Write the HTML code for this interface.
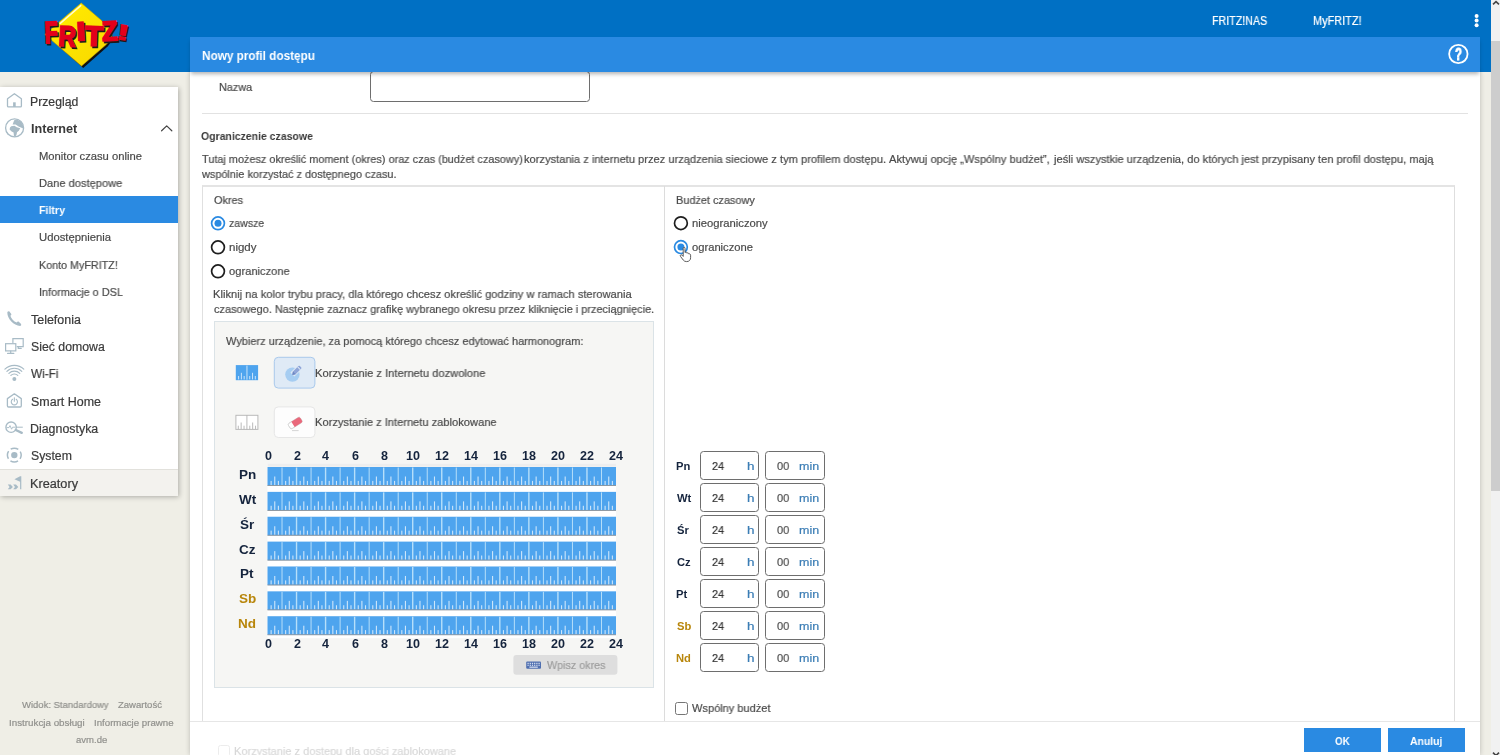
<!DOCTYPE html>
<html lang="pl">
<head>
<meta charset="utf-8">
<title>FRITZ!Box</title>
<style>
*{box-sizing:border-box;margin:0;padding:0}
html,body{width:1500px;height:755px;overflow:hidden}
body{background:#efeee6;font-family:"Liberation Sans",sans-serif;position:relative}
.abs{position:absolute}
.t{position:absolute;white-space:nowrap;line-height:1;transform-origin:0 0;display:block;will-change:transform}
#hdr{left:0;top:0;width:1500px;height:72px;background:#0070c4}
#side{left:0;top:87px;width:178px;height:408.6px;background:#fff;box-shadow:1px 1px 5px rgba(0,0,0,.28)}
#side .act{left:0;top:109.3px;width:178px;height:26.6px;background:#2a8ae2}
#side .kre{left:0;top:382.3px;width:178px;height:26.3px;background:#f3f2ee;border-top:1px solid #e2e1dc}
#dlg{left:190px;top:72px;width:1290px;height:683px;background:#fff;box-shadow:0 0 5px rgba(0,0,0,.22)}
#dhd{left:190px;top:37px;width:1290px;height:35px;background:#2a8ae2;box-shadow:0 3px 4px -1px rgba(0,0,0,.3)}
.hr{height:1px;background:#e2e2e2}
.inp{border:1px solid #6e6e6e;border-radius:3.5px;background:#fff}
.radio{width:15px;height:15px;border-radius:50%;border:1.6px solid #222;background:#fff}
.radio.on{border-color:#2a8ae2}
.radio.on::after{content:"";position:absolute;left:2.6px;top:2.6px;width:6.6px;height:6.6px;border-radius:50%;background:#2a8ae2}
.btn{background:#2a8ae2;height:23.8px;top:728.3px}
</style>
</head>
<body>
<div id="hdr" class="abs"></div>
<svg class="abs" style="left:30px;top:0" width="120" height="72" viewBox="30 0 120 72" font-family="Liberation Sans, sans-serif" font-weight="700" font-size="100">
<defs><linearGradient id="yg" x1="0" y1="0" x2="1" y2="1"><stop offset="0" stop-color="#fff27a"/><stop offset="0.25" stop-color="#ffe800"/><stop offset="1" stop-color="#f8d800"/></linearGradient></defs>
<path d="M83 5.2 L106.8 25 Q117.4 35.8 107.6 46.4 L83.2 68 L47 36 Z" fill="#111"/>
<path d="M81.2 3 L105 23.4 Q118.6 34.2 106 44.7 L81.5 66 L44.8 34.4 Z" fill="url(#yg)" stroke="#c9a800" stroke-width="0.6"/>
<path d="M80.8 5.6 L60 23.6" stroke="#fffbd0" stroke-width="1.4" stroke-linecap="round" fill="none"/>
<text transform="translate(1.50 1.60) rotate(-2 51.25 32.40) translate(44.30 42.89) scale(0.2173 0.3086)" fill="#1a1a1a" stroke="#1a1a1a" stroke-width="1.40" stroke-linejoin="miter" vector-effect="non-scaling-stroke">F</text>
<text transform="translate(1.50 1.60) rotate(3 67.70 36.30) translate(58.46 46.30) scale(0.2400 0.2899)" fill="#1a1a1a" stroke="#1a1a1a" stroke-width="1.40" stroke-linejoin="miter" vector-effect="non-scaling-stroke">R</text>
<text transform="translate(1.50 1.60) rotate(-3 80.90 31.10) translate(76.00 40.50) scale(0.3500 0.2686)" fill="#1a1a1a" stroke="#1a1a1a" stroke-width="1.40" stroke-linejoin="miter" vector-effect="non-scaling-stroke">I</text>
<text transform="translate(1.50 1.60) rotate(2 94.00 36.00) translate(84.60 45.90) scale(0.3033 0.2829)" fill="#1a1a1a" stroke="#1a1a1a" stroke-width="1.40" stroke-linejoin="miter" vector-effect="non-scaling-stroke">T</text>
<text transform="translate(1.50 1.60) rotate(-3 109.70 31.10) translate(101.78 40.70) scale(0.2596 0.2783)" fill="#1a1a1a" stroke="#1a1a1a" stroke-width="1.40" stroke-linejoin="miter" vector-effect="non-scaling-stroke">Z</text>
<text transform="translate(1.50 1.60) rotate(9 123.10 32.30) translate(116.94 39.70) scale(0.3733 0.2145)" fill="#1a1a1a" stroke="#1a1a1a" stroke-width="1.40" stroke-linejoin="miter" vector-effect="non-scaling-stroke">!</text>
<text transform="translate(0.00 0.00) rotate(-2 51.25 32.40) translate(44.30 42.89) scale(0.2173 0.3086)" fill="#e3001b" stroke="#e3001b" stroke-width="1.40" stroke-linejoin="miter" vector-effect="non-scaling-stroke">F</text>
<text transform="translate(0.00 0.00) rotate(3 67.70 36.30) translate(58.46 46.30) scale(0.2400 0.2899)" fill="#e3001b" stroke="#e3001b" stroke-width="1.40" stroke-linejoin="miter" vector-effect="non-scaling-stroke">R</text>
<text transform="translate(0.00 0.00) rotate(-3 80.90 31.10) translate(76.00 40.50) scale(0.3500 0.2686)" fill="#e3001b" stroke="#e3001b" stroke-width="1.40" stroke-linejoin="miter" vector-effect="non-scaling-stroke">I</text>
<text transform="translate(0.00 0.00) rotate(2 94.00 36.00) translate(84.60 45.90) scale(0.3033 0.2829)" fill="#e3001b" stroke="#e3001b" stroke-width="1.40" stroke-linejoin="miter" vector-effect="non-scaling-stroke">T</text>
<text transform="translate(0.00 0.00) rotate(-3 109.70 31.10) translate(101.78 40.70) scale(0.2596 0.2783)" fill="#e3001b" stroke="#e3001b" stroke-width="1.40" stroke-linejoin="miter" vector-effect="non-scaling-stroke">Z</text>
<text transform="translate(0.00 0.00) rotate(9 123.10 32.30) translate(116.94 39.70) scale(0.3733 0.2145)" fill="#e3001b" stroke="#e3001b" stroke-width="1.40" stroke-linejoin="miter" vector-effect="non-scaling-stroke">!</text>
</svg>
<div id="side" class="abs">
  <div class="abs act"></div>
  <div class="abs kre"></div>
</div>
<svg class="abs" style="left:0;top:87px" width="30" height="410" viewBox="0 87 30 410" fill="none" stroke="#a8bbc6" stroke-width="1.3" stroke-linecap="round" stroke-linejoin="round">
<!-- home -->
<path d="M7.5 98.8 L14.4 93.7 L21.4 98.8 V105.9 Q21.4 106.9 20.4 106.9 H8.5 Q7.5 106.9 7.5 105.9 Z"/>
<rect x="13.1" y="102.3" width="2.6" height="4.6" fill="#a8bbc6" stroke="none"/>
<!-- globe -->
<circle cx="14.6" cy="127.9" r="9"/>
<path fill="#a8bbc6" stroke="none" d="M14.2 120.2 L16.8 119.4 L20.6 121.4 L23 125 L23.2 128.6 L18.6 126.4 L15.6 124.6 L12.6 124.6 Z"/>
<path fill="#a8bbc6" stroke="none" d="M11.2 126.2 L14.4 125.7 L16.8 127.2 L20.2 128.3 L18.8 130.8 L17 132.2 L16.6 134.6 L15.4 136.6 L14 136.4 L13.6 132.6 L11.6 131.6 L9.6 129.6 L10 127.6 Z"/>
<path fill="#a8bbc6" stroke="none" d="M6.4 132.2 L7.8 133 L8.6 134.6 L7.6 134.4 Z"/>
<!-- phone -->
<path fill="#a8bbc6" stroke="none" d="M7.3 312.6 Q7.5 311.2 9.2 311.3 L11.3 314.1 Q11.7 315 10.4 315.8 C11 318.6 13.8 321.5 16.7 322.5 Q17.5 321.2 18.5 321.6 L21.1 324 Q21.7 325.4 20.2 325.9 C13.6 325.7 7.4 319 7.3 312.6 Z"/>
<!-- network -->
<g stroke-width="1.2" stroke-linejoin="miter">
<path d="M12.9 342.6 V338.6 H23.2 V346.7 H17.2"/>
<path d="M18.3 346.9 V348.4 H21.2"/>
<rect x="5.6" y="343.7" width="10.2" height="7.2" fill="#fff"/>
<path d="M10.7 351 V353 M7.6 353.4 H13.8"/>
</g>
<!-- wifi -->
<g stroke-width="1.15">
<path d="M4.9 369.2 A13.6 13.6 0 0 1 23.8 369.2"/>
<path d="M6.9 371.3 A10.7 10.7 0 0 1 21.8 371.3"/>
<path d="M8.9 373.3 A7.8 7.8 0 0 1 19.8 373.3"/>
<path d="M10.9 375.4 A4.9 4.9 0 0 1 17.8 375.4"/>
</g>
<circle cx="14.35" cy="378.9" r="2" fill="#a8bbc6" stroke="none"/>
<!-- smart home -->
<path d="M7.4 398.6 L14.35 393.8 L21.3 398.6 V405.8 Q21.3 407 20.1 407 H8.6 Q7.4 407 7.4 405.8 Z"/>
<path stroke-width="1.1" d="M12.5 399.3 A3.1 3.1 0 1 0 16.2 399.3 M14.35 397.7 V401.2"/>
<!-- diagnostics -->
<circle cx="11.1" cy="427.2" r="5.2" stroke-width="1.35"/>
<path stroke-width="0.9" d="M7 427.6 H9 L10 425.6 L11.6 429.2 L12.6 427.2 H15"/>
<path stroke-width="1" d="M16.4 427.2 H22.4"/>
<path stroke-width="2.4" d="M15.8 430 L21.8 432.8"/>
<!-- system -->
<circle cx="14.3" cy="455.1" r="6.9" stroke-width="1.5" stroke-dasharray="8.0 2.84" stroke-dashoffset="4.0" stroke-linecap="butt"/>
<circle cx="14.3" cy="455.1" r="3.2" fill="#a8bbc6" stroke="none"/>
<!-- wizards -->
<path fill="#a8bbc6" stroke="none" d="M20.1 476.2 H21.3 V489.3 H20.1 V481.8 L14.4 479.2 Z"/>
<path fill="#a8bbc6" stroke="none" d="M7.8 484.5 H10.6 L12.9 486.9 L10.6 489.3 H7.8 L9.6 486.9 Z M13.2 484.5 H16 L18.3 486.9 L16 489.3 H13.2 L15 486.9 Z"/>
</svg>
<svg class="abs" style="left:159px;top:122px" width="16" height="12" viewBox="159 122 16 12" fill="none" stroke="#444" stroke-width="1.2" stroke-linecap="round" stroke-linejoin="round"><path d="M161.6 130.8 L166.7 125.9 L171.8 130.8"/></svg>

<div id="dlg" class="abs"></div>
<!-- dialog content -->
<div class="abs inp" style="left:370px;top:71px;width:220px;height:30.6px"></div>
<div class="abs hr" style="left:202px;top:113px;width:1266px"></div>
<!-- outer box -->
<div class="abs" style="left:202px;top:185px;width:1253px;height:537px;border:1px solid #dedede;border-left:1.5px solid #e0e0e0;border-top:2px solid #e4e4e4"></div>
<div class="abs" style="left:664px;top:186px;width:1px;height:536px;background:#dcdcdc"></div>
<!-- radios -->
<svg class="abs" style="left:205px;top:210px" width="500" height="70" viewBox="205 210 500 70" fill="none" stroke-width="1.7">
<circle cx="218" cy="223.3" r="6.4" stroke="#2a8ae2"/><circle cx="218" cy="223.3" r="3.5" fill="#2a8ae2"/>
<circle cx="218" cy="247.3" r="6.4" stroke="#1e1e1e"/>
<circle cx="218" cy="271.3" r="6.4" stroke="#1e1e1e"/>
<circle cx="680.9" cy="223.2" r="6.4" stroke="#1e1e1e"/>
<circle cx="680.9" cy="247.1" r="6.4" stroke="#2a8ae2"/><circle cx="680.9" cy="247.1" r="3.5" fill="#2a8ae2"/>
<path d="M683.2 248.4 Q683.2 247.3 684.1 247.3 Q685 247.3 685 248.4 V252.6 Q685.6 251.9 686.4 252.3 Q686.9 252.6 686.9 253.2 Q687.5 252.6 688.2 253 Q688.8 253.4 688.8 254 Q689.4 253.6 690 254 Q690.6 254.4 690.6 255.2 V257.6 Q690.6 259.6 689.6 260.4 Q688.6 261.6 686.6 261.6 Q684.4 261.6 683.2 260 L680.5 256.4 Q679.9 255.6 680.6 255 Q681.4 254.5 682.1 255.2 L683.2 256.4 Z" fill="#fff" stroke="#4a4a4a" stroke-width="0.9" stroke-linejoin="round"/>
</svg>
<!-- inner schedule box -->
<div class="abs" style="left:214px;top:321px;width:440px;height:367px;background:#f6f6f4;border:1px solid #dbe3e7"></div>
<svg class="abs" style="left:214px;top:321px" width="440" height="367" viewBox="214 321 440 367">
<defs><g id="srow">
<rect x="267.50" y="0" width="348.50" height="18.60" fill="#4ea4ee"/>
<rect x="270.58" y="13.90" width="1.1" height="4.2" fill="#fff" fill-opacity=".72"/>
<rect x="274.21" y="9.50" width="1.1" height="8.6" fill="#fff" fill-opacity=".72"/>
<rect x="277.84" y="13.90" width="1.1" height="4.2" fill="#fff" fill-opacity=".72"/>
<rect x="285.10" y="13.90" width="1.1" height="4.2" fill="#fff" fill-opacity=".72"/>
<rect x="288.73" y="9.50" width="1.1" height="8.6" fill="#fff" fill-opacity=".72"/>
<rect x="292.36" y="13.90" width="1.1" height="4.2" fill="#fff" fill-opacity=".72"/>
<rect x="281.52" y="0.5" width="1.0" height="17.60" fill="#e8fbff" fill-opacity=".68"/>
<rect x="299.62" y="13.90" width="1.1" height="4.2" fill="#fff" fill-opacity=".72"/>
<rect x="303.25" y="9.50" width="1.1" height="8.6" fill="#fff" fill-opacity=".72"/>
<rect x="306.88" y="13.90" width="1.1" height="4.2" fill="#fff" fill-opacity=".72"/>
<rect x="295.84" y="0.5" width="1.4" height="17.60" fill="#e8fbff" fill-opacity=".68"/>
<rect x="314.14" y="13.90" width="1.1" height="4.2" fill="#fff" fill-opacity=".72"/>
<rect x="317.77" y="9.50" width="1.1" height="8.6" fill="#fff" fill-opacity=".72"/>
<rect x="321.40" y="13.90" width="1.1" height="4.2" fill="#fff" fill-opacity=".72"/>
<rect x="310.56" y="0.5" width="1.0" height="17.60" fill="#e8fbff" fill-opacity=".68"/>
<rect x="328.66" y="13.90" width="1.1" height="4.2" fill="#fff" fill-opacity=".72"/>
<rect x="332.29" y="9.50" width="1.1" height="8.6" fill="#fff" fill-opacity=".72"/>
<rect x="335.92" y="13.90" width="1.1" height="4.2" fill="#fff" fill-opacity=".72"/>
<rect x="324.88" y="0.5" width="1.4" height="17.60" fill="#e8fbff" fill-opacity=".68"/>
<rect x="343.18" y="13.90" width="1.1" height="4.2" fill="#fff" fill-opacity=".72"/>
<rect x="346.81" y="9.50" width="1.1" height="8.6" fill="#fff" fill-opacity=".72"/>
<rect x="350.44" y="13.90" width="1.1" height="4.2" fill="#fff" fill-opacity=".72"/>
<rect x="339.60" y="0.5" width="1.0" height="17.60" fill="#e8fbff" fill-opacity=".68"/>
<rect x="357.71" y="13.90" width="1.1" height="4.2" fill="#fff" fill-opacity=".72"/>
<rect x="361.34" y="9.50" width="1.1" height="8.6" fill="#fff" fill-opacity=".72"/>
<rect x="364.97" y="13.90" width="1.1" height="4.2" fill="#fff" fill-opacity=".72"/>
<rect x="353.93" y="0.5" width="1.4" height="17.60" fill="#e8fbff" fill-opacity=".68"/>
<rect x="372.23" y="13.90" width="1.1" height="4.2" fill="#fff" fill-opacity=".72"/>
<rect x="375.86" y="9.50" width="1.1" height="8.6" fill="#fff" fill-opacity=".72"/>
<rect x="379.49" y="13.90" width="1.1" height="4.2" fill="#fff" fill-opacity=".72"/>
<rect x="368.65" y="0.5" width="1.0" height="17.60" fill="#e8fbff" fill-opacity=".68"/>
<rect x="386.75" y="13.90" width="1.1" height="4.2" fill="#fff" fill-opacity=".72"/>
<rect x="390.38" y="9.50" width="1.1" height="8.6" fill="#fff" fill-opacity=".72"/>
<rect x="394.01" y="13.90" width="1.1" height="4.2" fill="#fff" fill-opacity=".72"/>
<rect x="382.97" y="0.5" width="1.4" height="17.60" fill="#e8fbff" fill-opacity=".68"/>
<rect x="401.27" y="13.90" width="1.1" height="4.2" fill="#fff" fill-opacity=".72"/>
<rect x="404.90" y="9.50" width="1.1" height="8.6" fill="#fff" fill-opacity=".72"/>
<rect x="408.53" y="13.90" width="1.1" height="4.2" fill="#fff" fill-opacity=".72"/>
<rect x="397.69" y="0.5" width="1.0" height="17.60" fill="#e8fbff" fill-opacity=".68"/>
<rect x="415.79" y="13.90" width="1.1" height="4.2" fill="#fff" fill-opacity=".72"/>
<rect x="419.42" y="9.50" width="1.1" height="8.6" fill="#fff" fill-opacity=".72"/>
<rect x="423.05" y="13.90" width="1.1" height="4.2" fill="#fff" fill-opacity=".72"/>
<rect x="412.01" y="0.5" width="1.4" height="17.60" fill="#e8fbff" fill-opacity=".68"/>
<rect x="430.31" y="13.90" width="1.1" height="4.2" fill="#fff" fill-opacity=".72"/>
<rect x="433.94" y="9.50" width="1.1" height="8.6" fill="#fff" fill-opacity=".72"/>
<rect x="437.57" y="13.90" width="1.1" height="4.2" fill="#fff" fill-opacity=".72"/>
<rect x="426.73" y="0.5" width="1.0" height="17.60" fill="#e8fbff" fill-opacity=".68"/>
<rect x="444.83" y="13.90" width="1.1" height="4.2" fill="#fff" fill-opacity=".72"/>
<rect x="448.46" y="9.50" width="1.1" height="8.6" fill="#fff" fill-opacity=".72"/>
<rect x="452.09" y="13.90" width="1.1" height="4.2" fill="#fff" fill-opacity=".72"/>
<rect x="441.05" y="0.5" width="1.4" height="17.60" fill="#e8fbff" fill-opacity=".68"/>
<rect x="459.35" y="13.90" width="1.1" height="4.2" fill="#fff" fill-opacity=".72"/>
<rect x="462.98" y="9.50" width="1.1" height="8.6" fill="#fff" fill-opacity=".72"/>
<rect x="466.61" y="13.90" width="1.1" height="4.2" fill="#fff" fill-opacity=".72"/>
<rect x="455.77" y="0.5" width="1.0" height="17.60" fill="#e8fbff" fill-opacity=".68"/>
<rect x="473.87" y="13.90" width="1.1" height="4.2" fill="#fff" fill-opacity=".72"/>
<rect x="477.50" y="9.50" width="1.1" height="8.6" fill="#fff" fill-opacity=".72"/>
<rect x="481.13" y="13.90" width="1.1" height="4.2" fill="#fff" fill-opacity=".72"/>
<rect x="470.09" y="0.5" width="1.4" height="17.60" fill="#e8fbff" fill-opacity=".68"/>
<rect x="488.39" y="13.90" width="1.1" height="4.2" fill="#fff" fill-opacity=".72"/>
<rect x="492.02" y="9.50" width="1.1" height="8.6" fill="#fff" fill-opacity=".72"/>
<rect x="495.65" y="13.90" width="1.1" height="4.2" fill="#fff" fill-opacity=".72"/>
<rect x="484.81" y="0.5" width="1.0" height="17.60" fill="#e8fbff" fill-opacity=".68"/>
<rect x="502.91" y="13.90" width="1.1" height="4.2" fill="#fff" fill-opacity=".72"/>
<rect x="506.54" y="9.50" width="1.1" height="8.6" fill="#fff" fill-opacity=".72"/>
<rect x="510.17" y="13.90" width="1.1" height="4.2" fill="#fff" fill-opacity=".72"/>
<rect x="499.13" y="0.5" width="1.4" height="17.60" fill="#e8fbff" fill-opacity=".68"/>
<rect x="517.43" y="13.90" width="1.1" height="4.2" fill="#fff" fill-opacity=".72"/>
<rect x="521.06" y="9.50" width="1.1" height="8.6" fill="#fff" fill-opacity=".72"/>
<rect x="524.69" y="13.90" width="1.1" height="4.2" fill="#fff" fill-opacity=".72"/>
<rect x="513.85" y="0.5" width="1.0" height="17.60" fill="#e8fbff" fill-opacity=".68"/>
<rect x="531.96" y="13.90" width="1.1" height="4.2" fill="#fff" fill-opacity=".72"/>
<rect x="535.59" y="9.50" width="1.1" height="8.6" fill="#fff" fill-opacity=".72"/>
<rect x="539.22" y="13.90" width="1.1" height="4.2" fill="#fff" fill-opacity=".72"/>
<rect x="528.17" y="0.5" width="1.4" height="17.60" fill="#e8fbff" fill-opacity=".68"/>
<rect x="546.48" y="13.90" width="1.1" height="4.2" fill="#fff" fill-opacity=".72"/>
<rect x="550.11" y="9.50" width="1.1" height="8.6" fill="#fff" fill-opacity=".72"/>
<rect x="553.74" y="13.90" width="1.1" height="4.2" fill="#fff" fill-opacity=".72"/>
<rect x="542.90" y="0.5" width="1.0" height="17.60" fill="#e8fbff" fill-opacity=".68"/>
<rect x="561.00" y="13.90" width="1.1" height="4.2" fill="#fff" fill-opacity=".72"/>
<rect x="564.63" y="9.50" width="1.1" height="8.6" fill="#fff" fill-opacity=".72"/>
<rect x="568.26" y="13.90" width="1.1" height="4.2" fill="#fff" fill-opacity=".72"/>
<rect x="557.22" y="0.5" width="1.4" height="17.60" fill="#e8fbff" fill-opacity=".68"/>
<rect x="575.52" y="13.90" width="1.1" height="4.2" fill="#fff" fill-opacity=".72"/>
<rect x="579.15" y="9.50" width="1.1" height="8.6" fill="#fff" fill-opacity=".72"/>
<rect x="582.78" y="13.90" width="1.1" height="4.2" fill="#fff" fill-opacity=".72"/>
<rect x="571.94" y="0.5" width="1.0" height="17.60" fill="#e8fbff" fill-opacity=".68"/>
<rect x="590.04" y="13.90" width="1.1" height="4.2" fill="#fff" fill-opacity=".72"/>
<rect x="593.67" y="9.50" width="1.1" height="8.6" fill="#fff" fill-opacity=".72"/>
<rect x="597.30" y="13.90" width="1.1" height="4.2" fill="#fff" fill-opacity=".72"/>
<rect x="586.26" y="0.5" width="1.4" height="17.60" fill="#e8fbff" fill-opacity=".68"/>
<rect x="604.56" y="13.90" width="1.1" height="4.2" fill="#fff" fill-opacity=".72"/>
<rect x="608.19" y="9.50" width="1.1" height="8.6" fill="#fff" fill-opacity=".72"/>
<rect x="611.82" y="13.90" width="1.1" height="4.2" fill="#fff" fill-opacity=".72"/>
<rect x="600.98" y="0.5" width="1.0" height="17.60" fill="#e8fbff" fill-opacity=".68"/>
<rect x="267.50" y="18.10" width="348.50" height="0.9" fill="#8b9299"/>
</g></defs>
<rect x="267.50" y="463.6" width="348.50" height="174.6" fill="#fff"/>
<rect x="267.50" y="463.6" width="348.50" height="3.2" fill="#eeeeee"/>
<use href="#srow" y="467.00"/>
<use href="#srow" y="491.87"/>
<use href="#srow" y="516.74"/>
<use href="#srow" y="541.61"/>
<use href="#srow" y="566.48"/>
<use href="#srow" y="591.35"/>
<use href="#srow" y="616.22"/>
<rect x="235.80" y="365.10" width="22.30" height="15.10" fill="#4ea4ee"/><rect x="246.45" y="365.60" width="1" height="14.10" fill="#fff" fill-opacity=".7"/><rect x="238.09" y="376.00" width="1" height="3.40" fill="#fff" fill-opacity=".7"/><rect x="240.88" y="372.80" width="1" height="6.60" fill="#fff" fill-opacity=".7"/><rect x="243.66" y="376.00" width="1" height="3.40" fill="#fff" fill-opacity=".7"/><rect x="249.24" y="376.00" width="1" height="3.40" fill="#fff" fill-opacity=".7"/><rect x="252.03" y="372.80" width="1" height="6.60" fill="#fff" fill-opacity=".7"/><rect x="254.81" y="376.00" width="1" height="3.40" fill="#fff" fill-opacity=".7"/>
<rect x="235.90" y="415.30" width="22.00" height="14.10" fill="#fff" stroke="#b9b9b9" stroke-width="1"/><rect x="246.40" y="415.30" width="1" height="14.10" fill="#aaa" fill-opacity=".8"/><rect x="237.78" y="425.70" width="1" height="3.40" fill="#aaa" fill-opacity=".8"/><rect x="240.65" y="422.50" width="1" height="6.60" fill="#aaa" fill-opacity=".8"/><rect x="243.53" y="425.70" width="1" height="3.40" fill="#aaa" fill-opacity=".8"/><rect x="249.28" y="425.70" width="1" height="3.40" fill="#aaa" fill-opacity=".8"/><rect x="252.15" y="422.50" width="1" height="6.60" fill="#aaa" fill-opacity=".8"/><rect x="255.03" y="425.70" width="1" height="3.40" fill="#aaa" fill-opacity=".8"/>
<rect x="274.3" y="357.3" width="40.6" height="30.8" rx="4" fill="#dfeaf6" stroke="#a9c9ec" stroke-width="1"/>
<circle cx="292.4" cy="374.6" r="7.2" fill="#a6cdf2"/>
<path d="M292.4 374.6 L299.6 367.4" stroke="#dfeaf6" stroke-width="5.6"/>
<g transform="translate(292.0 375.2) rotate(-45)"><path d="M0.4 0 L3.2 -1.9 H11 Q12 -1.9 12 -0.9 V0.9 Q12 1.9 11 1.9 H3.2 Z" fill="#8fa5d8"/><path d="M0.4 0 L3.2 -1.9 V1.9 Z" fill="#6c86c2"/><rect x="9.4" y="-1.9" width="0.9" height="3.8" fill="#dfeaf6"/></g>
<rect x="274.3" y="406.9" width="40.6" height="30.6" rx="4" fill="#fdfdfd" stroke="#e6e6e6" stroke-width="1"/>
<g transform="translate(295.2 423.0) rotate(-32)"><rect x="-7" y="-3.1" width="14" height="6.2" rx="1.6" fill="#fff" stroke="#c9c9c9" stroke-width=".8"/><path d="M-2.6 -3.1 H5.4 Q7 -3.1 7 -1.5 V1.5 Q7 3.1 5.4 3.1 H-2.6 Z" fill="#e9697b"/></g>
<path d="M292 430.6 H298.6" stroke="#c9c9c9" stroke-width=".8"/>
<rect x="513.4" y="655" width="104" height="19.8" rx="3" fill="#dedede"/>
<rect x="526.2" y="661.6" width="14.8" height="7.2" rx="1" fill="#4f6fb0"/>
<rect x="527.50" y="662.80" width="1.2" height="1.1" fill="#e6ecf8"/>
<rect x="529.70" y="662.80" width="1.2" height="1.1" fill="#e6ecf8"/>
<rect x="531.90" y="662.80" width="1.2" height="1.1" fill="#e6ecf8"/>
<rect x="534.10" y="662.80" width="1.2" height="1.1" fill="#e6ecf8"/>
<rect x="536.30" y="662.80" width="1.2" height="1.1" fill="#e6ecf8"/>
<rect x="538.50" y="662.80" width="1.2" height="1.1" fill="#e6ecf8"/>
<rect x="527.50" y="664.70" width="1.2" height="1.1" fill="#e6ecf8"/>
<rect x="529.70" y="664.70" width="1.2" height="1.1" fill="#e6ecf8"/>
<rect x="531.90" y="664.70" width="1.2" height="1.1" fill="#e6ecf8"/>
<rect x="534.10" y="664.70" width="1.2" height="1.1" fill="#e6ecf8"/>
<rect x="536.30" y="664.70" width="1.2" height="1.1" fill="#e6ecf8"/>
<rect x="538.50" y="664.70" width="1.2" height="1.1" fill="#e6ecf8"/>
<rect x="529.4" y="666.6" width="8.4" height="1.1" fill="#e6ecf8"/>
</svg>
<div class="abs inp" style="left:700.2px;top:451.2px;width:59.2px;height:29px"></div><div class="abs inp" style="left:765.3px;top:451.2px;width:59.7px;height:29px"></div>
<div class="abs inp" style="left:700.2px;top:483.2px;width:59.2px;height:29px"></div><div class="abs inp" style="left:765.3px;top:483.2px;width:59.7px;height:29px"></div>
<div class="abs inp" style="left:700.2px;top:515.2px;width:59.2px;height:29px"></div><div class="abs inp" style="left:765.3px;top:515.2px;width:59.7px;height:29px"></div>
<div class="abs inp" style="left:700.2px;top:547.2px;width:59.2px;height:29px"></div><div class="abs inp" style="left:765.3px;top:547.2px;width:59.7px;height:29px"></div>
<div class="abs inp" style="left:700.2px;top:579.2px;width:59.2px;height:29px"></div><div class="abs inp" style="left:765.3px;top:579.2px;width:59.7px;height:29px"></div>
<div class="abs inp" style="left:700.2px;top:611.2px;width:59.2px;height:29px"></div><div class="abs inp" style="left:765.3px;top:611.2px;width:59.7px;height:29px"></div>
<div class="abs inp" style="left:700.2px;top:643.2px;width:59.2px;height:29px"></div><div class="abs inp" style="left:765.3px;top:643.2px;width:59.7px;height:29px"></div>
<div class="abs" style="left:675.4px;top:702.4px;width:12.2px;height:12.2px;border:1.5px solid #767676;border-radius:2.5px;background:#fff"></div>
<div class="abs" style="left:218px;top:745px;width:12px;height:12px;border:1.5px solid #767676;border-radius:2.5px;background:#fff"></div>
<!--TEXTS_BEHIND-->
<!-- button bar -->
<div class="abs" style="left:190px;top:721px;width:1290px;height:34px;background:rgba(255,255,255,.86);border-top:1.5px solid #e6e6e6"></div>
<div class="abs btn" style="left:1304px;width:77px"></div>
<div class="abs btn" style="left:1388.2px;width:77.2px"></div>
<div id="dhd" class="abs"></div>
<svg class="abs" style="left:1440px;top:0" width="50" height="75" viewBox="1440 0 50 75">
<circle cx="1476.6" cy="15.9" r="2" fill="#fff"/><circle cx="1476.6" cy="20.6" r="2" fill="#fff"/><circle cx="1476.6" cy="25.3" r="2" fill="#fff"/>
<circle cx="1458.35" cy="54" r="9.2" fill="none" stroke="#fff" stroke-width="1.8"/>
</svg>

<span class="t" style="left:1211.55px;top:15.14px;font-size:12px;-webkit-text-stroke:0.2px #ffffff;color:#ffffff;transform:scaleX(0.8903);">FRITZ!NAS</span>
<span class="t" style="left:1312.83px;top:15.14px;font-size:12px;-webkit-text-stroke:0.2px #ffffff;color:#ffffff;transform:scaleX(0.9106);">MyFRITZ!</span>
<span class="t" style="left:202.04px;top:49.99px;font-size:12.3px;font-weight:700;color:#ffffff;transform:scaleX(0.9550);">Nowy profil dostępu</span>
<span class="t" style="left:1455.14px;top:45.89px;font-size:16.2px;font-weight:700;color:#ffffff;transform:scaleX(0.7088);-webkit-text-stroke:0.9px #fff;">?</span>
<span class="t" style="left:30.43px;top:96.14px;font-size:12px;-webkit-text-stroke:0.2px #3a3a3a;color:#3a3a3a;transform:scaleX(1.0200);">Przegląd</span>
<span class="t" style="left:30.56px;top:122.94px;font-size:12px;font-weight:700;color:#3a3a3a;transform:scaleX(1.0521);">Internet</span>
<span class="t" style="left:31.14px;top:313.74px;font-size:12px;-webkit-text-stroke:0.2px #3a3a3a;color:#3a3a3a;transform:scaleX(1.0374);">Telefonia</span>
<span class="t" style="left:30.89px;top:340.84px;font-size:12px;-webkit-text-stroke:0.2px #3a3a3a;color:#3a3a3a;transform:scaleX(1.0243);">Sieć domowa</span>
<span class="t" style="left:31.35px;top:368.24px;font-size:12px;-webkit-text-stroke:0.2px #3a3a3a;color:#3a3a3a;transform:scaleX(0.9791);">Wi-Fi</span>
<span class="t" style="left:30.88px;top:395.74px;font-size:12px;-webkit-text-stroke:0.2px #3a3a3a;color:#3a3a3a;transform:scaleX(1.0388);">Smart Home</span>
<span class="t" style="left:30.42px;top:423.14px;font-size:12px;-webkit-text-stroke:0.2px #3a3a3a;color:#3a3a3a;transform:scaleX(1.0336);">Diagnostyka</span>
<span class="t" style="left:30.89px;top:450.24px;font-size:12px;-webkit-text-stroke:0.2px #3a3a3a;color:#3a3a3a;transform:scaleX(1.0216);">System</span>
<span class="t" style="left:30.39px;top:478.44px;font-size:12px;-webkit-text-stroke:0.2px #3a3a3a;color:#3a3a3a;transform:scaleX(1.0585);">Kreatory</span>
<span class="t" style="left:39.10px;top:150.72px;font-size:11.2px;-webkit-text-stroke:0.2px #4a4a4a;color:#4a4a4a;transform:scaleX(1.0026);">Monitor czasu online</span>
<span class="t" style="left:39.11px;top:177.92px;font-size:11.2px;-webkit-text-stroke:0.2px #4a4a4a;color:#4a4a4a;transform:scaleX(0.9918);">Dane dostępowe</span>
<span class="t" style="left:39.34px;top:205.12px;font-size:11.2px;font-weight:700;color:#ffffff;transform:scaleX(0.9492);">Filtry</span>
<span class="t" style="left:39.14px;top:232.42px;font-size:11.2px;-webkit-text-stroke:0.2px #4a4a4a;color:#4a4a4a;transform:scaleX(1.0074);">Udostępnienia</span>
<span class="t" style="left:39.14px;top:259.82px;font-size:11.2px;-webkit-text-stroke:0.2px #4a4a4a;color:#4a4a4a;transform:scaleX(0.9597);">Konto MyFRITZ!</span>
<span class="t" style="left:39.03px;top:287.12px;font-size:11.2px;-webkit-text-stroke:0.2px #4a4a4a;color:#4a4a4a;transform:scaleX(0.9707);">Informacje o DSL</span>
<span class="t" style="left:21.70px;top:700.06px;font-size:9.5px;-webkit-text-stroke:0.2px #91918d;color:#91918d;transform:scaleX(0.9940);">Widok: Standardowy</span>
<span class="t" style="left:118.00px;top:700.06px;font-size:9.5px;-webkit-text-stroke:0.2px #91918d;color:#91918d;transform:scaleX(1.0031);">Zawartość</span>
<span class="t" style="left:9.42px;top:717.86px;font-size:9.5px;-webkit-text-stroke:0.2px #91918d;color:#91918d;transform:scaleX(1.0315);">Instrukcja obsługi</span>
<span class="t" style="left:93.63px;top:717.86px;font-size:9.5px;-webkit-text-stroke:0.2px #91918d;color:#91918d;transform:scaleX(1.0180);">Informacje prawne</span>
<span class="t" style="left:75.80px;top:735.06px;font-size:9.5px;-webkit-text-stroke:0.2px #91918d;color:#91918d;transform:scaleX(1.0043);">avm.de</span>
<span class="t" style="left:218.83px;top:81.92px;font-size:11.2px;-webkit-text-stroke:0.2px #4a4a4a;color:#4a4a4a;transform:scaleX(0.9684);">Nazwa</span>
<span class="t" style="left:201.38px;top:131.42px;font-size:11.2px;font-weight:700;color:#3a3a3a;transform:scaleX(0.9369);">Ograniczenie czasowe</span>
<span class="t" style="left:201.76px;top:154.42px;font-size:11.2px;-webkit-text-stroke:0.2px #4a4a4a;color:#4a4a4a;transform:scaleX(0.9731);">Tutaj możesz określić moment (okres) oraz czas (budżet czasowy)</span>
<span class="t" style="left:524.26px;top:154.42px;font-size:11.2px;-webkit-text-stroke:0.2px #4a4a4a;color:#4a4a4a;transform:scaleX(0.9919);">korzystania z internetu przez urządzenia sieciowe z tym profilem dostępu.</span>
<span class="t" style="left:889.30px;top:154.42px;font-size:11.2px;-webkit-text-stroke:0.2px #4a4a4a;color:#4a4a4a;transform:scaleX(0.9945);">Aktywuj opcję „Wspólny budżet”,</span>
<span class="t" style="left:1053.60px;top:154.42px;font-size:11.2px;-webkit-text-stroke:0.2px #4a4a4a;color:#4a4a4a;transform:scaleX(0.9920);">jeśli wszystkie urządzenia, do których jest przypisany ten profil dostępu, mają</span>
<span class="t" style="left:202.05px;top:168.92px;font-size:11.2px;-webkit-text-stroke:0.2px #4a4a4a;color:#4a4a4a;transform:scaleX(0.9745);">wspólnie korzystać z dostępnego czasu.</span>
<span class="t" style="left:213.51px;top:195.02px;font-size:11.2px;-webkit-text-stroke:0.2px #4a4a4a;color:#4a4a4a;transform:scaleX(0.9734);">Okres</span>
<span class="t" style="left:229.17px;top:218.32px;font-size:11.2px;-webkit-text-stroke:0.2px #4a4a4a;color:#4a4a4a;transform:scaleX(0.9446);">zawsze</span>
<span class="t" style="left:228.88px;top:242.32px;font-size:11.2px;-webkit-text-stroke:0.2px #4a4a4a;color:#4a4a4a;transform:scaleX(1.0278);">nigdy</span>
<span class="t" style="left:229.15px;top:266.32px;font-size:11.2px;-webkit-text-stroke:0.2px #4a4a4a;color:#4a4a4a;transform:scaleX(0.9952);">ograniczone</span>
<span class="t" style="left:213.10px;top:289.12px;font-size:11.2px;-webkit-text-stroke:0.2px #4a4a4a;color:#4a4a4a;transform:scaleX(0.9951);">Kliknij na kolor trybu pracy, dla którego chcesz określić godziny w ramach sterowania</span>
<span class="t" style="left:213.56px;top:303.92px;font-size:11.2px;-webkit-text-stroke:0.2px #4a4a4a;color:#4a4a4a;transform:scaleX(0.9778);">czasowego. Następnie zaznacz grafikę wybranego okresu przez kliknięcie i przeciągnięcie.</span>
<span class="t" style="left:226.20px;top:335.52px;font-size:11.2px;-webkit-text-stroke:0.2px #4a4a4a;color:#4a4a4a;transform:scaleX(0.9828);">Wybierz urządzenie, za pomocą którego chcesz edytować harmonogram:</span>
<span class="t" style="left:314.70px;top:367.72px;font-size:11.2px;-webkit-text-stroke:0.2px #4a4a4a;color:#4a4a4a;transform:scaleX(0.9969);">Korzystanie z Internetu dozwolone</span>
<span class="t" style="left:314.71px;top:417.22px;font-size:11.2px;-webkit-text-stroke:0.2px #4a4a4a;color:#4a4a4a;transform:scaleX(0.9931);">Korzystanie z Internetu zablokowane</span>
<span class="t" style="left:546.80px;top:659.72px;font-size:11.2px;-webkit-text-stroke:0.2px #9d9d9d;color:#9d9d9d;transform:scaleX(0.9606);">Wpisz okres</span>
<span class="t" style="left:676.12px;top:195.02px;font-size:11.2px;-webkit-text-stroke:0.2px #4a4a4a;color:#4a4a4a;transform:scaleX(0.9747);">Budżet czasowy</span>
<span class="t" style="left:691.90px;top:218.32px;font-size:11.2px;-webkit-text-stroke:0.2px #4a4a4a;color:#4a4a4a;transform:scaleX(1.0062);">nieograniczony</span>
<span class="t" style="left:692.15px;top:242.12px;font-size:11.2px;-webkit-text-stroke:0.2px #4a4a4a;color:#4a4a4a;transform:scaleX(1.0001);">ograniczone</span>
<span class="t" style="left:692.20px;top:703.32px;font-size:11.2px;-webkit-text-stroke:0.2px #4a4a4a;color:#4a4a4a;transform:scaleX(0.9859);">Wspólny budżet</span>
<span class="t" style="left:234.11px;top:745.72px;font-size:11.2px;-webkit-text-stroke:0.2px #d8d8d8;color:#d8d8d8;transform:scaleX(0.9839);">Korzystanie z dostępu dla gości zablokowane</span>
<span class="t" style="left:1334.94px;top:736.26px;font-size:10.8px;font-weight:700;color:#ffffff;transform:scaleX(0.9044);">OK</span>
<span class="t" style="left:1410.36px;top:736.26px;font-size:10.8px;font-weight:700;color:#ffffff;transform:scaleX(0.9634);">Anuluj</span>
<span class="t" style="left:238.50px;top:468.07px;font-size:13.5px;font-weight:700;color:#15243d;transform:scaleX(0.9750);">Pn</span>
<span class="t" style="left:238.63px;top:492.92px;font-size:13.5px;font-weight:700;color:#15243d;transform:scaleX(0.9750);">Wt</span>
<span class="t" style="left:240.04px;top:517.77px;font-size:13.5px;font-weight:700;color:#15243d;transform:scaleX(0.9750);">Śr</span>
<span class="t" style="left:238.96px;top:542.62px;font-size:13.5px;font-weight:700;color:#15243d;transform:scaleX(0.9750);">Cz</span>
<span class="t" style="left:240.04px;top:567.47px;font-size:13.5px;font-weight:700;color:#15243d;transform:scaleX(0.9750);">Pt</span>
<span class="t" style="left:238.70px;top:592.32px;font-size:13.5px;font-weight:700;color:#b8860b;transform:scaleX(0.9750);">Sb</span>
<span class="t" style="left:238.24px;top:617.17px;font-size:13.5px;font-weight:700;color:#b8860b;transform:scaleX(0.9750);">Nd</span>
<span class="t" style="left:264.52px;top:449.87px;font-size:12.2px;font-weight:700;color:#15243d;transform:scaleX(1.0300);">0</span>
<span class="t" style="left:264.52px;top:638.17px;font-size:12.2px;font-weight:700;color:#15243d;transform:scaleX(1.0300);">0</span>
<span class="t" style="left:293.57px;top:449.87px;font-size:12.2px;font-weight:700;color:#15243d;transform:scaleX(1.0300);">2</span>
<span class="t" style="left:293.57px;top:638.17px;font-size:12.2px;font-weight:700;color:#15243d;transform:scaleX(1.0300);">2</span>
<span class="t" style="left:322.49px;top:449.87px;font-size:12.2px;font-weight:700;color:#15243d;transform:scaleX(1.0300);">4</span>
<span class="t" style="left:322.49px;top:638.17px;font-size:12.2px;font-weight:700;color:#15243d;transform:scaleX(1.0300);">4</span>
<span class="t" style="left:351.58px;top:449.87px;font-size:12.2px;font-weight:700;color:#15243d;transform:scaleX(1.0300);">6</span>
<span class="t" style="left:351.58px;top:638.17px;font-size:12.2px;font-weight:700;color:#15243d;transform:scaleX(1.0300);">6</span>
<span class="t" style="left:380.58px;top:449.87px;font-size:12.2px;font-weight:700;color:#15243d;transform:scaleX(1.0300);">8</span>
<span class="t" style="left:380.58px;top:638.17px;font-size:12.2px;font-weight:700;color:#15243d;transform:scaleX(1.0300);">8</span>
<span class="t" style="left:405.97px;top:449.87px;font-size:12.2px;font-weight:700;color:#15243d;transform:scaleX(1.0300);">10</span>
<span class="t" style="left:405.97px;top:638.17px;font-size:12.2px;font-weight:700;color:#15243d;transform:scaleX(1.0300);">10</span>
<span class="t" style="left:434.99px;top:449.87px;font-size:12.2px;font-weight:700;color:#15243d;transform:scaleX(1.0300);">12</span>
<span class="t" style="left:434.99px;top:638.17px;font-size:12.2px;font-weight:700;color:#15243d;transform:scaleX(1.0300);">12</span>
<span class="t" style="left:463.78px;top:449.87px;font-size:12.2px;font-weight:700;color:#15243d;transform:scaleX(1.0300);">14</span>
<span class="t" style="left:463.78px;top:638.17px;font-size:12.2px;font-weight:700;color:#15243d;transform:scaleX(1.0300);">14</span>
<span class="t" style="left:493.01px;top:449.87px;font-size:12.2px;font-weight:700;color:#15243d;transform:scaleX(1.0300);">16</span>
<span class="t" style="left:493.01px;top:638.17px;font-size:12.2px;font-weight:700;color:#15243d;transform:scaleX(1.0300);">16</span>
<span class="t" style="left:521.98px;top:449.87px;font-size:12.2px;font-weight:700;color:#15243d;transform:scaleX(1.0300);">18</span>
<span class="t" style="left:521.98px;top:638.17px;font-size:12.2px;font-weight:700;color:#15243d;transform:scaleX(1.0300);">18</span>
<span class="t" style="left:551.26px;top:449.87px;font-size:12.2px;font-weight:700;color:#15243d;transform:scaleX(1.0300);">20</span>
<span class="t" style="left:551.26px;top:638.17px;font-size:12.2px;font-weight:700;color:#15243d;transform:scaleX(1.0300);">20</span>
<span class="t" style="left:580.28px;top:449.87px;font-size:12.2px;font-weight:700;color:#15243d;transform:scaleX(1.0300);">22</span>
<span class="t" style="left:580.28px;top:638.17px;font-size:12.2px;font-weight:700;color:#15243d;transform:scaleX(1.0300);">22</span>
<span class="t" style="left:609.06px;top:449.87px;font-size:12.2px;font-weight:700;color:#15243d;transform:scaleX(1.0300);">24</span>
<span class="t" style="left:609.06px;top:638.17px;font-size:12.2px;font-weight:700;color:#15243d;transform:scaleX(1.0300);">24</span>
<span class="t" style="left:676.31px;top:460.52px;font-size:11.2px;font-weight:700;color:#15243d;transform:scaleX(0.9900);">Pn</span>
<span class="t" style="left:711.67px;top:460.52px;font-size:11.2px;-webkit-text-stroke:0.2px #333333;color:#333333;transform:scaleX(0.9631);">24</span>
<span class="t" style="left:746.69px;top:460.52px;font-size:11.2px;-webkit-text-stroke:0.2px #3b7db5;color:#3b7db5;transform:scaleX(1.2083);">h</span>
<span class="t" style="left:777.21px;top:460.52px;font-size:11.2px;-webkit-text-stroke:0.2px #505050;color:#505050;transform:scaleX(0.9803);">00</span>
<span class="t" style="left:799.12px;top:460.52px;font-size:11.2px;-webkit-text-stroke:0.2px #3b7db5;color:#3b7db5;transform:scaleX(1.1159);">min</span>
<span class="t" style="left:677.00px;top:492.52px;font-size:11.2px;font-weight:700;color:#15243d;transform:scaleX(0.9900);">Wt</span>
<span class="t" style="left:711.67px;top:492.52px;font-size:11.2px;-webkit-text-stroke:0.2px #333333;color:#333333;transform:scaleX(0.9631);">24</span>
<span class="t" style="left:746.69px;top:492.52px;font-size:11.2px;-webkit-text-stroke:0.2px #3b7db5;color:#3b7db5;transform:scaleX(1.2083);">h</span>
<span class="t" style="left:777.21px;top:492.52px;font-size:11.2px;-webkit-text-stroke:0.2px #505050;color:#505050;transform:scaleX(0.9803);">00</span>
<span class="t" style="left:799.12px;top:492.52px;font-size:11.2px;-webkit-text-stroke:0.2px #3b7db5;color:#3b7db5;transform:scaleX(1.1159);">min</span>
<span class="t" style="left:676.70px;top:524.52px;font-size:11.2px;font-weight:700;color:#15243d;transform:scaleX(0.9900);">Śr</span>
<span class="t" style="left:711.67px;top:524.52px;font-size:11.2px;-webkit-text-stroke:0.2px #333333;color:#333333;transform:scaleX(0.9631);">24</span>
<span class="t" style="left:746.69px;top:524.52px;font-size:11.2px;-webkit-text-stroke:0.2px #3b7db5;color:#3b7db5;transform:scaleX(1.2083);">h</span>
<span class="t" style="left:777.21px;top:524.52px;font-size:11.2px;-webkit-text-stroke:0.2px #505050;color:#505050;transform:scaleX(0.9803);">00</span>
<span class="t" style="left:799.12px;top:524.52px;font-size:11.2px;-webkit-text-stroke:0.2px #3b7db5;color:#3b7db5;transform:scaleX(1.1159);">min</span>
<span class="t" style="left:676.55px;top:556.52px;font-size:11.2px;font-weight:700;color:#15243d;transform:scaleX(0.9900);">Cz</span>
<span class="t" style="left:711.67px;top:556.52px;font-size:11.2px;-webkit-text-stroke:0.2px #333333;color:#333333;transform:scaleX(0.9631);">24</span>
<span class="t" style="left:746.69px;top:556.52px;font-size:11.2px;-webkit-text-stroke:0.2px #3b7db5;color:#3b7db5;transform:scaleX(1.2083);">h</span>
<span class="t" style="left:777.21px;top:556.52px;font-size:11.2px;-webkit-text-stroke:0.2px #505050;color:#505050;transform:scaleX(0.9803);">00</span>
<span class="t" style="left:799.12px;top:556.52px;font-size:11.2px;-webkit-text-stroke:0.2px #3b7db5;color:#3b7db5;transform:scaleX(1.1159);">min</span>
<span class="t" style="left:676.31px;top:588.52px;font-size:11.2px;font-weight:700;color:#15243d;transform:scaleX(0.9900);">Pt</span>
<span class="t" style="left:711.67px;top:588.52px;font-size:11.2px;-webkit-text-stroke:0.2px #333333;color:#333333;transform:scaleX(0.9631);">24</span>
<span class="t" style="left:746.69px;top:588.52px;font-size:11.2px;-webkit-text-stroke:0.2px #3b7db5;color:#3b7db5;transform:scaleX(1.2083);">h</span>
<span class="t" style="left:777.21px;top:588.52px;font-size:11.2px;-webkit-text-stroke:0.2px #505050;color:#505050;transform:scaleX(0.9803);">00</span>
<span class="t" style="left:799.12px;top:588.52px;font-size:11.2px;-webkit-text-stroke:0.2px #3b7db5;color:#3b7db5;transform:scaleX(1.1159);">min</span>
<span class="t" style="left:676.70px;top:620.52px;font-size:11.2px;font-weight:700;color:#b8860b;transform:scaleX(0.9900);">Sb</span>
<span class="t" style="left:711.67px;top:620.52px;font-size:11.2px;-webkit-text-stroke:0.2px #333333;color:#333333;transform:scaleX(0.9631);">24</span>
<span class="t" style="left:746.69px;top:620.52px;font-size:11.2px;-webkit-text-stroke:0.2px #3b7db5;color:#3b7db5;transform:scaleX(1.2083);">h</span>
<span class="t" style="left:777.21px;top:620.52px;font-size:11.2px;-webkit-text-stroke:0.2px #505050;color:#505050;transform:scaleX(0.9803);">00</span>
<span class="t" style="left:799.12px;top:620.52px;font-size:11.2px;-webkit-text-stroke:0.2px #3b7db5;color:#3b7db5;transform:scaleX(1.1159);">min</span>
<span class="t" style="left:676.31px;top:652.52px;font-size:11.2px;font-weight:700;color:#b8860b;transform:scaleX(0.9900);">Nd</span>
<span class="t" style="left:711.67px;top:652.52px;font-size:11.2px;-webkit-text-stroke:0.2px #333333;color:#333333;transform:scaleX(0.9631);">24</span>
<span class="t" style="left:746.69px;top:652.52px;font-size:11.2px;-webkit-text-stroke:0.2px #3b7db5;color:#3b7db5;transform:scaleX(1.2083);">h</span>
<span class="t" style="left:777.21px;top:652.52px;font-size:11.2px;-webkit-text-stroke:0.2px #505050;color:#505050;transform:scaleX(0.9803);">00</span>
<span class="t" style="left:799.12px;top:652.52px;font-size:11.2px;-webkit-text-stroke:0.2px #3b7db5;color:#3b7db5;transform:scaleX(1.1159);">min</span>
<!-- scrollbar -->
<div class="abs" style="left:1491px;top:0;width:9px;height:755px;background:#f1f1f1"></div>
<div class="abs" style="left:1491px;top:41.3px;width:9px;height:449.5px;background:#cdcdcd"></div>
<svg class="abs" style="left:1491px;top:0" width="9" height="755" viewBox="1491 0 9 755" fill="none" stroke="#444" stroke-width="1.6"><path d="M1493 4.4 L1496 1.6 L1499 4.4"/><path d="M1493 752.6 L1496 755.6 L1499 752.6"/></svg>

</body>
</html>
